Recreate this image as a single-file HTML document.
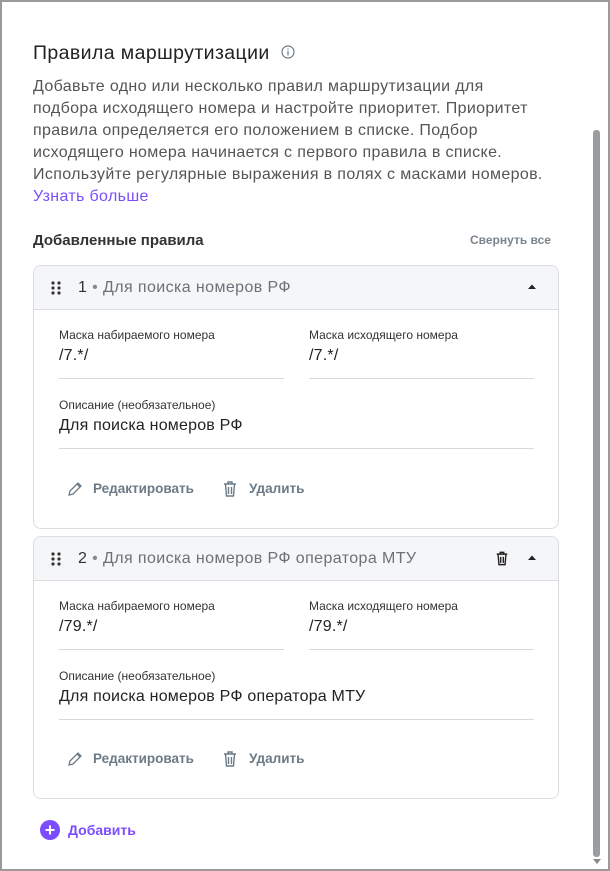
<!DOCTYPE html><html><head><meta charset="utf-8"><style>
*{box-sizing:border-box;margin:0;padding:0}
body{width:610px;height:871px;background:#fff;font-family:"Liberation Sans",sans-serif;position:relative;overflow:hidden;}
.frame{position:absolute;left:0;top:0;width:610px;height:871px;border:2px solid #9a9a9a;pointer-events:none}
.a{position:absolute;white-space:nowrap}
.card{position:absolute;left:33px;width:526px;border:1px solid #dcdde0;border-radius:8px;overflow:hidden}
.hd{height:44px;background:#f5f6f8;border-bottom:1px solid #dcdde0;position:relative}
.lbl{font-size:12px;color:#333}
.val{font-size:16px;color:#222;letter-spacing:0.2px}
.ln{position:absolute;height:1px;background:#d8d8d8}
.act{font-size:13.5px;font-weight:bold;color:#6b7a86}
</style></head><body>
<div class="a" style="left:33px;top:42px;font-size:19.5px;color:#222;letter-spacing:0.4px">Правила маршрутизации</div>
<svg class="a" style="left:281px;top:45px" width="14" height="14" viewBox="0 0 14 14"><circle cx="7" cy="7" r="6" fill="none" stroke="#6b7a86" stroke-width="1.2"/><rect x="6.4" y="6" width="1.2" height="4.5" fill="#6b7a86"/><rect x="6.4" y="3.5" width="1.2" height="1.3" fill="#6b7a86"/></svg>
<div class="a" style="left:33px;top:76px;font-size:16px;line-height:22px;color:#555;letter-spacing:0.35px">Добавьте одно или несколько правил маршрутизации для<br>подбора исходящего номера и настройте приоритет. Приоритет<br>правила определяется его положением в списке. Подбор<br>исходящего номера начинается с первого правила в списке.<br>Используйте регулярные выражения в полях с масками номеров.<br><span style="color:#7c4dff">Узнать больше</span></div>
<div class="a" style="left:33px;top:232px;font-size:15px;font-weight:bold;color:#333">Добавленные правила</div>
<div class="a" style="left:470px;top:233px;font-size:12px;font-weight:bold;color:#7a8590">Свернуть все</div>

<div class="card" style="top:265px;height:264px">
<div class="hd">
<svg class="a" style="left:17px;top:15px" width="10" height="14"><g fill="#333"><circle cx="2" cy="2" r="1.6"/><circle cx="8" cy="2" r="1.6"/><circle cx="2" cy="7" r="1.6"/><circle cx="8" cy="7" r="1.6"/><circle cx="2" cy="12" r="1.6"/><circle cx="8" cy="12" r="1.6"/></g></svg>
<div class="a" style="left:44px;top:13px;font-size:16px;color:#333;letter-spacing:0.4px">1 <span style="color:#888">•</span> <span style="color:#6b7178">Для поиска номеров РФ</span></div>
<svg class="a" style="left:493px;top:17px" width="10" height="8"><path d="M1 6L5 1.5L9 6Z" fill="#222"/></svg>
</div>
<div class="a lbl" style="left:25px;top:62px">Маска набираемого номера</div>
<div class="a val" style="left:25px;top:81px">/7.*/</div>
<div class="ln" style="left:25px;top:112px;width:225px"></div>
<div class="a lbl" style="left:275px;top:62px">Маска исходящего номера</div>
<div class="a val" style="left:275px;top:81px">/7.*/</div>
<div class="ln" style="left:275px;top:112px;width:225px"></div>
<div class="a lbl" style="left:25px;top:132px">Описание (необязательное)</div>
<div class="a val" style="left:25px;top:151px">Для поиска номеров РФ</div>
<div class="ln" style="left:25px;top:182px;width:475px"></div>
<svg class="a" style="left:33px;top:215px" width="16" height="16" viewBox="0 0 16 16"><path d="M2 14l1-4L11 2l3 3-8 8z M10 3l3 3" fill="none" stroke="#6b7a86" stroke-width="1.3"/></svg>
<div class="a act" style="left:59px;top:215px">Редактировать</div>
<svg class="a" style="left:188px;top:214px" width="16" height="18" viewBox="0 0 16 18"><path d="M2 4h12M6 4V2h4v2M3.5 4l1 12h7l1-12M6.5 7v7M9.5 7v7" fill="none" stroke="#6b7a86" stroke-width="1.4"/></svg>
<div class="a act" style="left:215px;top:215px">Удалить</div>
</div>

<div class="card" style="top:536px;height:263px">
<div class="hd">
<svg class="a" style="left:17px;top:15px" width="10" height="14"><g fill="#333"><circle cx="2" cy="2" r="1.6"/><circle cx="8" cy="2" r="1.6"/><circle cx="2" cy="7" r="1.6"/><circle cx="8" cy="7" r="1.6"/><circle cx="2" cy="12" r="1.6"/><circle cx="8" cy="12" r="1.6"/></g></svg>
<div class="a" style="left:44px;top:13px;font-size:16px;color:#333;letter-spacing:0.4px">2 <span style="color:#888">•</span> <span style="color:#6b7178">Для поиска номеров РФ оператора МТУ</span></div>
<svg class="a" style="left:461px;top:13px" width="14" height="17" viewBox="0 0 16 18"><path d="M2 4h12M6 4V2h4v2M3.5 4l1 12h7l1-12M6.5 7v7M9.5 7v7" fill="none" stroke="#222" stroke-width="1.6"/></svg>
<svg class="a" style="left:493px;top:17px" width="10" height="8"><path d="M1 6L5 1.5L9 6Z" fill="#222"/></svg>
</div>
<div class="a lbl" style="left:25px;top:62px">Маска набираемого номера</div>
<div class="a val" style="left:25px;top:81px">/79.*/</div>
<div class="ln" style="left:25px;top:112px;width:225px"></div>
<div class="a lbl" style="left:275px;top:62px">Маска исходящего номера</div>
<div class="a val" style="left:275px;top:81px">/79.*/</div>
<div class="ln" style="left:275px;top:112px;width:225px"></div>
<div class="a lbl" style="left:25px;top:132px">Описание (необязательное)</div>
<div class="a val" style="left:25px;top:151px">Для поиска номеров РФ оператора МТУ</div>
<div class="ln" style="left:25px;top:182px;width:475px"></div>
<svg class="a" style="left:33px;top:214px" width="16" height="16" viewBox="0 0 16 16"><path d="M2 14l1-4L11 2l3 3-8 8z M10 3l3 3" fill="none" stroke="#6b7a86" stroke-width="1.3"/></svg>
<div class="a act" style="left:59px;top:214px">Редактировать</div>
<svg class="a" style="left:188px;top:213px" width="16" height="18" viewBox="0 0 16 18"><path d="M2 4h12M6 4V2h4v2M3.5 4l1 12h7l1-12M6.5 7v7M9.5 7v7" fill="none" stroke="#6b7a86" stroke-width="1.4"/></svg>
<div class="a act" style="left:215px;top:214px">Удалить</div>
</div>

<svg class="a" style="left:40px;top:820px" width="20" height="20"><circle cx="10" cy="10" r="10" fill="#7c4dff"/><path d="M10 5.5v9M5.5 10h9" stroke="#fff" stroke-width="2"/></svg>
<div class="a" style="left:68px;top:822px;font-size:14px;font-weight:bold;color:#7c4dff">Добавить</div>

<div class="a" style="left:593px;top:130px;width:7px;height:727px;background:#9a9d9f;border-radius:3px"></div>
<svg class="a" style="left:592px;top:858px" width="10" height="8"><path d="M1 1h8L5 6z" fill="#888"/></svg>
<div class="frame"></div>
</body></html>
